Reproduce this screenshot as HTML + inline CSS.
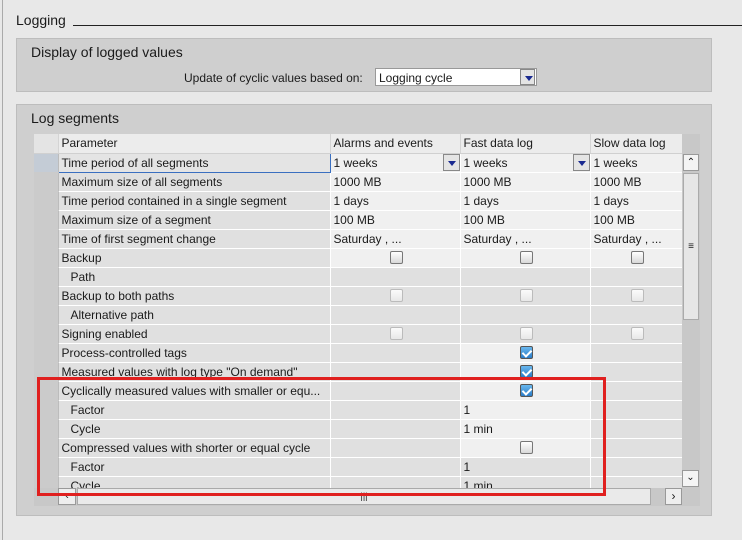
<!DOCTYPE html>
<html><head><meta charset="utf-8"><style>
*{box-sizing:border-box;margin:0;padding:0}
body{width:742px;height:540px;background:#e8e8e8;font-family:"Liberation Sans",sans-serif;font-size:12px;color:#1a1a1a;position:relative;overflow:hidden}
.abs{position:absolute}
.panel{position:absolute;left:11px;width:701px;background:#cfcfcf;border:1px solid #bdbdbd}
.t{position:absolute;left:34px;top:134px;border-collapse:collapse;table-layout:fixed;width:648px}
.t td{height:19px;border-bottom:1px solid #fff;border-right:1px solid #fff;padding:0 0 0 3px;white-space:nowrap;overflow:hidden;background:#e0e0e0;line-height:18px}
.t td.s{background:#cbcbcb;border-right:1px solid #bcbcbc;border-bottom-color:#cbcbcb;padding:0}
.t td.e{background:#f0f0f0}
.t td.ind{padding-left:12px}
.t tr.h td{background:#ececec;border-bottom:1px solid #d0d0d0;border-right:1px solid #d4d4d4}
.cb{display:block;margin:0 auto;width:13px;height:13px;border:1px solid #777;border-radius:2px;background:linear-gradient(#fff,#d8d8d8)}
.cb.d{border-color:#bbb;background:linear-gradient(#fbfbfb,#e8e8e8)}
.cb.c{background:linear-gradient(#6ab8ee,#2a7cc8);border-color:#555;position:relative}
.cb.c:after{content:"";position:absolute;left:3px;top:1px;width:4px;height:7px;border:solid #fff;border-width:0 2px 2px 0;transform:rotate(45deg)}
.dd{float:right;width:17px;height:17px;border:1px solid #888;background:#e4e4e4;margin-top:0;position:relative}
.dd:after{content:"";position:absolute;left:4px;top:6px;border-left:4px solid transparent;border-right:4px solid transparent;border-top:5px solid #1a2a90}
</style></head><body>
<div class="abs" style="left:2px;top:0;width:1px;height:540px;background:#aaa"></div>
<div class="abs" style="left:16px;top:12px;font-size:14px">Logging</div>
<div class="abs" style="left:73px;top:25px;width:669px;height:1px;background:#222"></div>

<div class="panel" style="top:38px;height:54px;left:16px;width:696px">
<div class="abs" style="left:14px;top:5px;font-size:14px">Display of logged values</div>
<div class="abs" style="left:167px;top:32px">Update of cyclic values based on:</div>
<div class="abs" style="left:358px;top:29px;width:162px;height:18px;background:#fff;border:1px solid #999;padding:2px 3px">Logging cycle<div class="dd" style="position:absolute;right:1px;top:0;width:15px;height:16px"></div></div>
</div>

<div class="panel" style="top:104px;height:412px;left:16px;width:696px">
<div class="abs" style="left:14px;top:5px;font-size:14px">Log segments</div>
<div class="abs" style="left:17px;top:29px;width:666px;height:372px;background:#c8c8c8"></div>
</div>

<div class="abs" style="left:34px;top:134px;width:648px;height:354px;overflow:hidden">
<table class="t" style="left:0;top:0">
<colgroup><col style="width:24px"><col style="width:272px"><col style="width:130px"><col style="width:130px"><col style="width:92px"></colgroup>
<tr class="h"><td class="s" style="background:#e4e4e4"></td><td>Parameter</td><td>Alarms and events</td><td>Fast data log</td><td>Slow data log</td></tr>
<tr><td class="s" style="background:#c4ccd6"></td><td style="border:1px solid #3a6fc0;background:#e4e4e4">Time period of all segments</td><td class="e">1 weeks<span class="dd"></span></td><td class="e">1 weeks<span class="dd"></span></td><td class="e">1 weeks</td></tr>
<tr><td class="s"></td><td>Maximum size of all segments</td><td class="e">1000 MB</td><td class="e">1000 MB</td><td class="e">1000 MB</td></tr>
<tr><td class="s"></td><td>Time period contained in a single segment</td><td class="e">1 days</td><td class="e">1 days</td><td class="e">1 days</td></tr>
<tr><td class="s"></td><td>Maximum size of a segment</td><td class="e">100 MB</td><td class="e">100 MB</td><td class="e">100 MB</td></tr>
<tr><td class="s"></td><td>Time of first segment change</td><td class="e">Saturday , ...</td><td class="e">Saturday , ...</td><td class="e">Saturday , ...</td></tr>
<tr><td class="s"></td><td>Backup</td><td class="e"><span class="cb"></span></td><td class="e"><span class="cb"></span></td><td class="e"><span class="cb"></span></td></tr>
<tr><td class="s"></td><td class="ind">Path</td><td></td><td></td><td></td></tr>
<tr><td class="s"></td><td>Backup to both paths</td><td><span class="cb d"></span></td><td><span class="cb d"></span></td><td><span class="cb d"></span></td></tr>
<tr><td class="s"></td><td class="ind">Alternative path</td><td></td><td></td><td></td></tr>
<tr><td class="s"></td><td>Signing enabled</td><td><span class="cb d"></span></td><td><span class="cb d"></span></td><td><span class="cb d"></span></td></tr>
<tr><td class="s"></td><td>Process-controlled tags</td><td></td><td class="e"><span class="cb c"></span></td><td></td></tr>
<tr><td class="s"></td><td>Measured values with log type "On demand"</td><td></td><td class="e"><span class="cb c"></span></td><td></td></tr>
<tr><td class="s"></td><td>Cyclically measured values with smaller or equ...</td><td></td><td class="e"><span class="cb c"></span></td><td></td></tr>
<tr><td class="s"></td><td class="ind">Factor</td><td></td><td class="e">1</td><td></td></tr>
<tr><td class="s"></td><td class="ind">Cycle</td><td></td><td class="e">1 min</td><td></td></tr>
<tr><td class="s"></td><td>Compressed values with shorter or equal cycle</td><td></td><td class="e"><span class="cb"></span></td><td></td></tr>
<tr><td class="s"></td><td class="ind">Factor</td><td></td><td>1</td><td></td></tr>
<tr><td class="s"></td><td class="ind">Cycle</td><td></td><td>1 min</td><td></td></tr>
</table>
</div>

<div class="abs" style="left:682px;top:153px;width:17px;height:352px;background:#c8c8c8"></div>
<div class="abs" style="left:683px;top:154px;width:16px;height:17px;background:#f4f4f4;border:1px solid #999;text-align:center;font-size:10px;line-height:15px">&#8963;</div>
<div class="abs" style="left:683px;top:173px;width:16px;height:147px;background:#e6e6e6;border:1px solid #aaa;text-align:center;line-height:145px;font-size:10px">≡</div>
<div class="abs" style="left:682px;top:470px;width:17px;height:17px;background:#f4f4f4;border:1px solid #999;text-align:center;font-size:10px;line-height:14px">&#8964;</div>
<div class="abs" style="left:58px;top:488px;width:624px;height:17px;background:#c8c8c8"></div>
<div class="abs" style="left:58px;top:488px;width:18px;height:17px;background:#eee;border:1px solid #999;font-size:11px;text-align:center;line-height:15px">‹</div>
<div class="abs" style="left:77px;top:488px;width:574px;height:17px;background:#eaeaea;border:1px solid #aaa;text-align:center;font-size:9px;line-height:15px">|||</div>
<div class="abs" style="left:665px;top:488px;width:17px;height:17px;background:#eee;border:1px solid #999;font-size:12px;text-align:center;line-height:15px">›</div>

<div class="abs" style="left:37px;top:377px;width:569px;height:119px;border:3px solid #e0201f"></div>
</body></html>
